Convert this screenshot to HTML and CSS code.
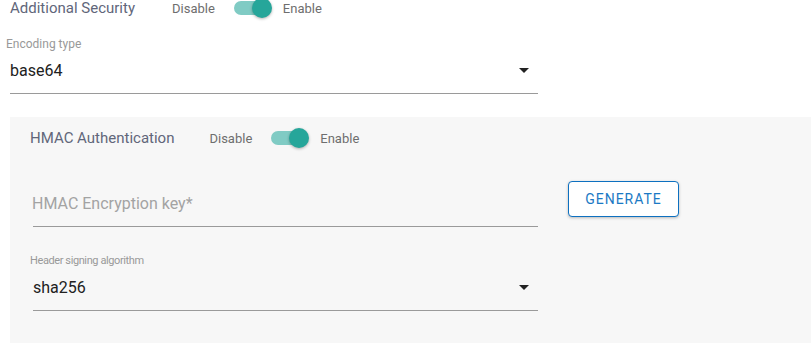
FILE: index.html
```html
<!DOCTYPE html>
<html lang="en">
<head>
    <meta charset="UTF-8">
    <meta name="viewport" content="width=device-width, initial-scale=1.0">
    <title>Additional Security</title>
    <link rel="stylesheet" href="styles.css">
</head>
<body>
    <div class="security">
        <div class="toggle-row">
            <span class="toggle-title">Additional Security</span>
            <span class="toggle-text">Disable</span>
            <span class="switch on"><span class="switch-track"></span><span class="switch-thumb"></span></span>
            <span class="toggle-text">Enable</span>
        </div>

        <div class="field">
            <label class="field-label">Encoding type</label>
            <div class="select">
                <span class="select-value">base64</span>
                <span class="select-arrow"></span>
            </div>
        </div>
    </div>

    <div class="panel">
        <div class="toggle-row">
            <span class="toggle-title">HMAC Authentication</span>
            <span class="toggle-text">Disable</span>
            <span class="switch on"><span class="switch-track"></span><span class="switch-thumb"></span></span>
            <span class="toggle-text">Enable</span>
        </div>

        <div class="key-row">
            <div class="text-input">
                <span class="placeholder">HMAC Encryption key*</span>
            </div>
            <button class="btn-outline">GENERATE</button>
        </div>

        <div class="field field-algo">
            <label class="field-label small">Header signing algorithm</label>
            <div class="select">
                <span class="select-value">sha256</span>
                <span class="select-arrow"></span>
            </div>
        </div>
    </div>
</body>
</html>
```

FILE: styles.css
```css
body {
    margin: 0;
    font-family: Roboto, 'Noto Sans', sans-serif;
    background: #fff;
    color: #212121;
    overflow: hidden;
}

.security {
    padding-left: 10px;
}

/* toggle rows */
.toggle-row {
    display: flex;
    align-items: center;
    height: 16px;
}

.toggle-title {
    margin-right: 37px;
    font-size: 15px;
    color: #61667a;
}

.toggle-text {
    font-size: 13px;
    color: #6e6e6e;
}

.switch {
    position: relative;
    width: 38px;
    height: 20px;
    margin: 0 11px 0 19px;
}

.switch-track {
    position: absolute;
    left: 0;
    top: 3px;
    width: 36px;
    height: 14px;
    border-radius: 7px;
    background: #80cbc4;
}

.switch-thumb {
    position: absolute;
    top: 0;
    right: 0;
    width: 20px;
    height: 20px;
    border-radius: 50%;
    background: #26a69a;
    box-shadow: 0 1px 3px rgba(0, 0, 0, 0.3);
}

/* select fields */
.field {
    width: 528px;
    margin-top: 21px;
}

.field-label {
    display: block;
    margin-left: -4px;
    font-size: 12px;
    line-height: 14px;
    color: #999;
}

.field-label.small {
    margin-left: -3px;
    font-size: 11px;
    letter-spacing: -0.4px;
}

.select {
    display: flex;
    align-items: center;
    justify-content: space-between;
    margin-top: 10px;
    padding-bottom: 13px;
    border-bottom: 1px solid #9a9a9a;
}

.select-value {
    font-size: 16px;
    line-height: 19px;
    color: #212121;
}

.select-arrow {
    width: 0;
    height: 0;
    margin-right: 9px;
    border-left: 5px solid transparent;
    border-right: 5px solid transparent;
    border-top: 5px solid #222;
}

/* HMAC panel */
.panel {
    margin: 23px 0 0 10px;
    padding: 13px 0 32px 23px;
    background: #f7f7f7;
}

.panel .toggle-title {
    margin-left: -3px;
    margin-right: 35px;
}

.key-row {
    display: flex;
    align-items: flex-start;
    margin-top: 35px;
}

.text-input {
    width: 505px;
    padding: 13px 0;
    border-bottom: 1px solid #9a9a9a;
}

.placeholder {
    display: block;
    margin-left: -1px;
    font-size: 16px;
    line-height: 19px;
    color: #a3a3a3;
}

.btn-outline {
    margin-left: 30px;
    width: 111px;
    height: 36px;
    padding: 0;
    font-family: Roboto, sans-serif;
    font-size: 14px;
    letter-spacing: 1px;
    color: #1b79c4;
    background: #fff;
    border: 1.5px solid #0d70c0;
    border-radius: 4px;
    box-shadow: 0 1px 3px rgba(0, 0, 0, 0.25);
}

.field-algo {
    width: 505px;
    margin-top: 27px;
}
```
